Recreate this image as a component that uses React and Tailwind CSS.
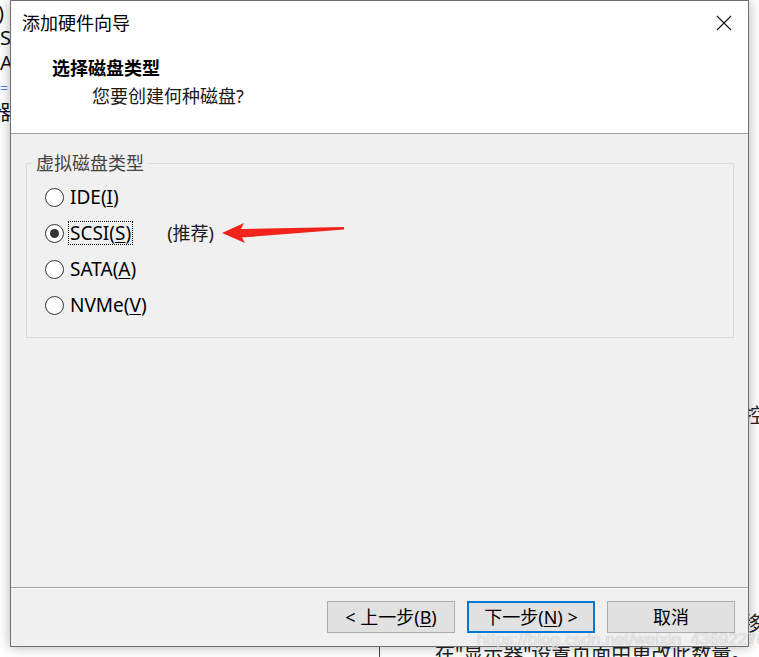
import React from 'react'

const FONT = "font-['Noto_Sans','Noto_Sans_CJK_SC',sans-serif]"

function Radio({ checked, label, accel, before, focused }) {
  return (
    <div className="flex h-[36px] items-center">
      <span className="flex h-[19px] w-[19px] items-center justify-center rounded-full border border-[#333] bg-white">
        {checked && <span className="h-[9px] w-[9px] rounded-full bg-[#333]" />}
      </span>
      <span
        className={
          'ml-[5px] px-[1px] text-[19px] leading-[22px] text-black ' +
          (focused ? 'outline outline-1 outline-dotted outline-black' : '')
        }
      >
        {before}(<span className="underline underline-offset-2">{accel}</span>)
      </span>
      {label}
    </div>
  )
}

function Arrow() {
  return (
    <svg width="124" height="22" viewBox="0 0 124 22" className="ml-[8px]">
      <polygon
        points="0,11 22,1 19,7 122,5 122,7.5 20,15.5 23,21"
        fill="#f2231b"
      />
    </svg>
  )
}

export default function App() {
  return (
    <div className={`relative h-[657px] w-[759px] overflow-hidden bg-white ${FONT}`}>
      {/* page behind the dialog */}
      <div className="absolute left-0 top-0 text-[20px] leading-[25px] text-[#111]">
        <div className="-ml-[2px]">)</div>
        <div>SI</div>
        <div>A</div>
        <div className="text-[14px] text-[#3b82f6]">=</div>
        <div className="-ml-[9px]">器</div>
      </div>
      <div className="absolute left-[744px] top-[406px] text-[20px] leading-[20px] text-[#222]">控</div>
      <div className="absolute left-[742px] top-[614px] text-[20px] leading-[20px] text-[#222]">移</div>
      <div className="absolute left-[379px] top-[630px] h-[30px] w-px bg-[#444]" />
      <div className="absolute left-[435px] top-[641px] whitespace-nowrap text-[20px] leading-[26px] text-[#222]">
        在"显示器"设置页面中更改此数量。
      </div>

      {/* dialog */}
      <div className="absolute left-[10px] top-0 flex h-[647px] w-[739px] flex-col border border-[#6f6f6f] bg-[#f0f0f0] shadow-[0_0_12px_rgba(0,0,0,0.3)]">
        <div className="h-[133px] border-b border-[#a0a0a0] bg-white">
          <div className="flex h-[44px] items-center justify-between pl-[11px] pr-[16px]">
            <span className="text-[18px] text-black">添加硬件向导</span>
            <svg width="16" height="16" viewBox="0 0 16 16">
              <path d="M1 1L15 15M15 1L1 15" stroke="#111" strokeWidth="1.1" />
            </svg>
          </div>
          <div className="mt-[11px] pl-[41px] text-[18px] font-bold leading-[24px] text-black">
            选择磁盘类型
          </div>
          <div className="mt-[4px] pl-[81px] text-[18px] leading-[24px] text-[#1a1a1a]">
            您要创建何种磁盘?
          </div>
        </div>

        <div className="flex-1">
          <fieldset className="ml-[15px] mr-[14px] mt-[17px] border border-[#dcdcdc]">
            <legend className="ml-[5px] px-[4px] text-[18px] leading-[24px] text-[#444]">
              虚拟磁盘类型
            </legend>
            <div className="pb-[14px] pl-[18px] pt-[4px]">
              <Radio before="IDE" accel="I" />
              <Radio
                checked
                focused
                before="SCSI"
                accel="S"
                label={
                  <div className="ml-[35px] flex items-center">
                    <span className="text-[18px] text-[#1a1a1a]">(推荐)</span>
                    <Arrow />
                  </div>
                }
              />
              <Radio before="SATA" accel="A" />
              <Radio before="NVMe" accel="V" />
            </div>
          </fieldset>
        </div>

        <div className="h-[59px] border-t border-[#a0a0a0]">
          <div className="h-px bg-white" />
          <div className="mr-[13px] mt-[12px] flex justify-end gap-[12px]">
            <button className="flex h-[32px] w-[128px] items-center justify-center border border-[#adadad] bg-[#e1e1e1] text-[18px] text-black">
              &lt; 上一步(<span className="underline underline-offset-2">B</span>)
            </button>
            <button className="flex h-[32px] w-[128px] items-center justify-center border-2 border-[#0078d7] bg-[#e1e1e1] text-[18px] text-black">
              下一步(<span className="underline underline-offset-2">N</span>) &gt;
            </button>
            <button className="flex h-[32px] w-[128px] items-center justify-center border border-[#adadad] bg-[#e1e1e1] text-[18px] text-black">
              取消
            </button>
          </div>
        </div>
      </div>

      {/* watermark */}
      <div className="pointer-events-none absolute left-[477px] top-[628px] whitespace-nowrap font-['Liberation_Sans',sans-serif] text-[17px] leading-[24px] text-white/75 [text-shadow:0_0_1px_rgba(0,0,0,0.35)]">
        https://blog.csdn.net/weixin_43692276
      </div>
    </div>
  )
}
